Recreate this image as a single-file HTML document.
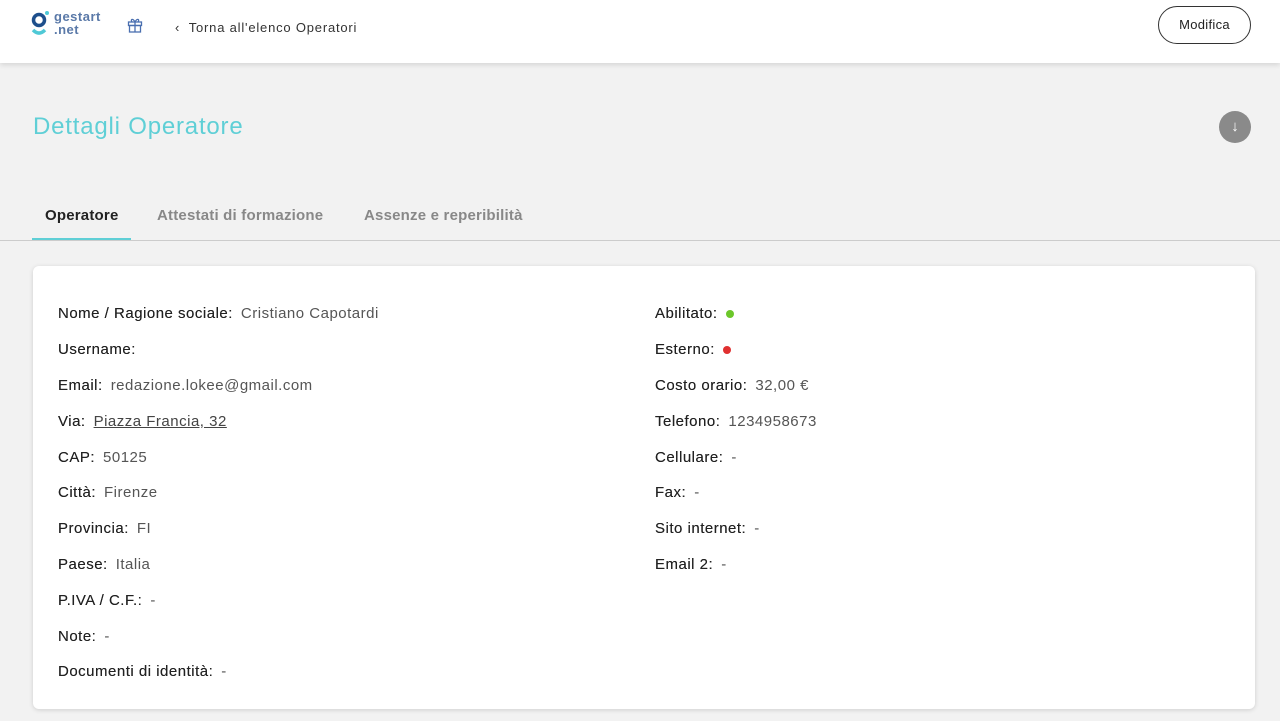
<!DOCTYPE html>
<html><head><meta charset="utf-8"><style>
*{box-sizing:border-box;margin:0;padding:0}
body{width:1280px;height:721px;overflow:hidden;background:#f2f2f2;font-family:"Liberation Sans",sans-serif;position:relative}
.hdr{position:absolute;left:0;top:0;width:1280px;height:63px;background:#fff;box-shadow:0 2px 5px rgba(0,0,0,.12)}
.t{position:absolute;white-space:nowrap}
.btn{position:absolute;left:1158px;top:6px;width:93px;height:38px;border:1.5px solid #333;border-radius:19px;font-size:13px;color:#222;text-align:center;line-height:36px;letter-spacing:.3px}
.card{position:absolute;left:33px;top:266px;width:1222px;height:443px;background:#fff;border-radius:6px;box-shadow:0 1px 5px rgba(0,0,0,.15)}
.r{position:absolute;font-size:15px;color:#333;white-space:nowrap;letter-spacing:.5px}
.r b{font-weight:normal;color:#222;text-shadow:0 0 .3px #222}
.r span{color:#555;margin-left:8px}
.dot{display:inline-block;width:8px;height:8px;border-radius:50%;margin-left:8px;vertical-align:middle}
</style></head><body>
<div class="hdr">
 <svg class="t" style="left:31px;top:10px" width="20" height="28" viewBox="0 0 20 28"><circle cx="8" cy="10" r="5.5" fill="none" stroke="#1e4f8c" stroke-width="3.5"/><path d="M2 20 Q8 26 14 20" fill="none" stroke="#4fc9d6" stroke-width="3.5"/><circle cx="16" cy="3" r="2" fill="#4fc9d6"/></svg>
 <div class="t" style="left:54px;top:10px;font-size:13px;line-height:13px;color:#5a79a8;font-weight:bold;letter-spacing:.5px">gestart<br>.net</div>
 <svg class="t" style="left:127px;top:17px" width="16" height="16" viewBox="0 0 16 16" fill="none" stroke="#4a6fb0" stroke-width="1.3"><rect x="1.5" y="5" width="13" height="3.5"/><rect x="2.5" y="8.5" width="11" height="6.5"/><path d="M8 5v10M8 5C6 1 3 2 5 5M8 5c2-4 5-3 3 0"/></svg>
 <div class="t" style="left:175px;top:20px;font-size:13px;color:#333;letter-spacing:.8px">‹&nbsp; Torna all'elenco Operatori</div>
 <div class="btn">Modifica</div>
</div>
<div class="t" style="left:33px;top:113px;font-size:24px;color:#5fcfd6;letter-spacing:.8px">Dettagli Operatore</div>
<div class="t" style="left:1219px;top:111px;width:32px;height:32px;border-radius:50%;background:#8a8a8a;color:#fff;text-align:center;line-height:31px;font-size:15px">↓</div>
<div class="t" style="left:45px;top:207px;font-size:15px;color:#222;font-weight:bold;letter-spacing:.2px">Operatore</div>
<div class="t" style="left:157px;top:207px;font-size:15px;color:#888;font-weight:bold;letter-spacing:.2px">Attestati di formazione</div>
<div class="t" style="left:364px;top:207px;font-size:15px;color:#888;font-weight:bold;letter-spacing:.2px">Assenze e reperibilità</div>
<div class="t" style="left:32px;top:238px;width:99px;height:3px;background:#5fcfd6"></div>
<div class="t" style="left:0;top:240px;width:1280px;height:1px;background:#ccc"></div>
<div class="card"></div>
<div class="r" style="left:58px;top:305px"><b>Nome / Ragione sociale:</b><span>Cristiano Capotardi</span></div>
<div class="r" style="left:58px;top:341px"><b>Username:</b></div>
<div class="r" style="left:58px;top:377px"><b>Email:</b><span>redazione.lokee@gmail.com</span></div>
<div class="r" style="left:58px;top:413px"><b>Via:</b><span style="text-decoration:underline;color:#444">Piazza Francia, 32</span></div>
<div class="r" style="left:58px;top:449px"><b>CAP:</b><span>50125</span></div>
<div class="r" style="left:58px;top:484px"><b>Città:</b><span>Firenze</span></div>
<div class="r" style="left:58px;top:520px"><b>Provincia:</b><span>FI</span></div>
<div class="r" style="left:58px;top:556px"><b>Paese:</b><span>Italia</span></div>
<div class="r" style="left:58px;top:592px"><b>P.IVA / C.F.:</b><span>-</span></div>
<div class="r" style="left:58px;top:628px"><b>Note:</b><span>-</span></div>
<div class="r" style="left:58px;top:663px"><b>Documenti di identità:</b><span>-</span></div>
<div class="r" style="left:655px;top:305px"><b>Abilitato:</b><i class="dot" style="background:#6cc72a"></i></div>
<div class="r" style="left:655px;top:341px"><b>Esterno:</b><i class="dot" style="background:#e03030"></i></div>
<div class="r" style="left:655px;top:377px"><b>Costo orario:</b><span>32,00 €</span></div>
<div class="r" style="left:655px;top:413px"><b>Telefono:</b><span>1234958673</span></div>
<div class="r" style="left:655px;top:449px"><b>Cellulare:</b><span>-</span></div>
<div class="r" style="left:655px;top:484px"><b>Fax:</b><span>-</span></div>
<div class="r" style="left:655px;top:520px"><b>Sito internet:</b><span>-</span></div>
<div class="r" style="left:655px;top:556px"><b>Email 2:</b><span>-</span></div>
</body></html>
